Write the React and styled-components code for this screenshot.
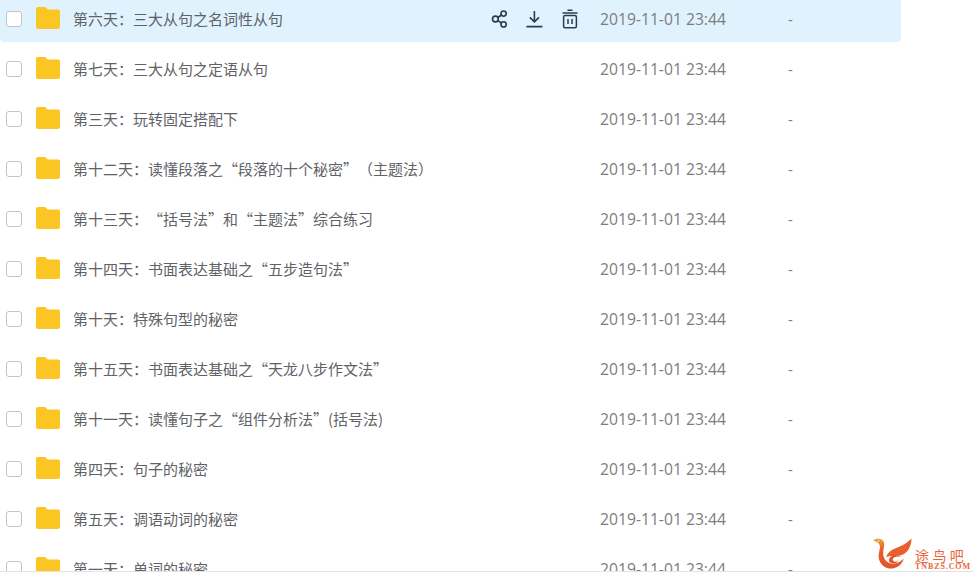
import React from "react";
import styled, { createGlobalStyle } from "styled-components";

const Global = createGlobalStyle`
  html, body { margin: 0; padding: 0; background: #fff; height: 575px; overflow: hidden; }
  #root { height: 575px; }
`;
const Page = styled.div`
  position: relative;
  width: 974px;
  height: 575px;
  overflow: hidden;
  display: flex;
  flex-direction: column;
  font-family: "Noto Sans CJK SC", "Open Sans", sans-serif;
`;
const Viewport = styled.div`
  height: 571px;
  overflow: hidden;
  border-bottom: 1px solid #e3e3e3;
  flex: none;
`;
const List = styled.div`
  width: 901px;
  margin-top: -6px;
  display: flex;
  flex-direction: column;
`;
const Row = styled.div`
  height: 50px;
  flex: none;
  display: flex;
  align-items: center;
  background: ${(p) => (p.$active ? "#e0f2fd" : "transparent")};
  clip-path: inset(0 0 2px 0 round 0 0 4px 4px);
`;
const Check = styled.span`
  box-sizing: border-box;
  width: 16px;
  height: 16px;
  margin-left: 6px;
  border: 1.5px solid #c4c4c4;
  border-radius: 3px;
  background: #fff;
  flex: none;
`;
const FolderSlot = styled.span`
  margin-left: 13px;
  width: 26px;
  height: 24px;
  flex: none;
  display: flex;
  margin-top: -3px;
`;
const Name = styled.div`
  margin-left: 12px;
  margin-bottom: 2px;
  width: 416px;
  flex: none;
  font-size: 15px;
  color: #5f6368;
  white-space: nowrap;
  text-spacing-trim: space-all;
`;
const Actions = styled.div`
  width: 111px;
  flex: none;
  display: flex;
  gap: 13px;
  color: #2c3a4a;
  margin-bottom: 1px;
`;
const Action = styled.span`
  width: 22px;
  height: 22px;
  display: flex;
  align-items: center;
  justify-content: center;
`;
const Time = styled.div`
  width: 188px;
  flex: none;
  font-family: "Open Sans", sans-serif;
  font-size: 15.7px;
  margin-bottom: 1px;
  color: #7d7d7d;
  white-space: nowrap;
`;
const Size = styled.div`
  font-family: "Open Sans", sans-serif;
  font-size: 15px;
  margin-bottom: 1px;
  color: #7d7d7d;
`;
const Watermark = styled.div`
  position: absolute;
  left: 872px;
  top: 538px;
  width: 100px;
  height: 34px;
  display: flex;
  align-items: flex-start;
`;
const MarkText = styled.div`
  margin-left: 2px;
  margin-top: 9px;
  display: flex;
  flex-direction: column;
  color: #e8663a;
`;
const MarkCn = styled.span`
  font-size: 14px;
  line-height: 16px;
  letter-spacing: 3.4px;
  font-family: "Noto Sans CJK SC", sans-serif;
`;
const MarkEn = styled.span`
  font-family: "Liberation Serif", serif;
  font-size: 8px;
  line-height: 8px;
  font-weight: bold;
  letter-spacing: 0.9px;
`;

const Folder = () => (
  <svg width="26" height="24" viewBox="0 0 26 24">
    <path
      d="M1 3C1 1.8 1.8 1 3 1h6.4c.8 0 1.4.3 1.9.9l1.3 1.7h10.6c1.1 0 1.8.8 1.8 1.9v15.6c0 1.1-.8 1.9-1.9 1.9H3c-1.2 0-2-.8-2-2z"
      fill="#fbc524"
    />
  </svg>
);
const Share = () => (
  <svg width="18" height="20" viewBox="0 0 18 20" fill="none" stroke="currentColor" strokeWidth="1.6">
    <circle cx="12.6" cy="4.6" r="2.6" />
    <circle cx="4.4" cy="10" r="2.9" />
    <circle cx="12.6" cy="15.4" r="2.6" />
    <path d="M10.4 6 6.9 8.5M6.9 11.6l3.5 2.4" />
  </svg>
);
const Download = () => (
  <svg width="18" height="18" viewBox="0 0 18 18" fill="none" stroke="currentColor" strokeWidth="1.6">
    <path d="M8.4 1v10.5M3.8 7.4l4.6 4.4L13 7.4M.4 16.6h16" />
  </svg>
);
const Trash = () => (
  <svg width="18" height="20" viewBox="0 0 18 20" fill="none" stroke="currentColor" strokeWidth="1.5">
    <path d="M6.5 1.2h5M1.5 4h15" />
    <rect x="2.6" y="6.4" width="12.8" height="12.4" rx="1.5" />
    <path d="M7 10v5M11 10v5" />
  </svg>
);
const Bird = () => (
  <svg width="41" height="33" viewBox="0 0 41 33">
    <defs>
      <linearGradient id="birdHead" x1="0" y1="0" x2="0" y2="1">
        <stop offset="0" stopColor="#efa23a" />
        <stop offset="0.35" stopColor="#e8602c" />
        <stop offset="1" stopColor="#e2532a" />
      </linearGradient>
    </defs>
    <path
      d="M1 2.5C3 .6 7 0 9.6 1.6 12 3 12.8 6 12 9c-1 4.500-1.400 8.500.6 12 2 3.600 6.400 5.400 10.400 4.600 3.600-.6 6.400-2.400 8.600-5-.8 4.400-4.400 9-10.600 9.800-6 .8-11-2-13.400-7.400C5.400 18 7.600 13 8 9.600 8.300 6.600 6.600 4 1 2.500z"
      fill="url(#birdHead)"
    />
    <path d="M14 19C17 11.500 24 10.500 30 7.500 34 5.500 37 3 39.500.5 39.500 9 35 16 28 17.500c-5 1-9-.5-14 1.500z" fill="#e8602c" />
    <path
      d="M17 23c-.4-3 2.400-5.600 6-5.800 2.600-.2 5 .4 7 1.600-2.800-.4-6-.4-8 .8-1.600 1-1.800 3 0 3.800 1.400.6 3 0 3.600-1 .2 2-2 3.200-4.200 3-2.200-.2-4.200-1-4.400-2.400z"
      fill="#e2532a"
    />
    <circle cx="6.500" cy="3" r=".8" fill="#fff" />
  </svg>
);

const names = [
  "第六天：三大从句之名词性从句",
  "第七天：三大从句之定语从句",
  "第三天：玩转固定搭配下",
  "第十二天：读懂段落之“段落的十个秘密”（主题法）",
  "第十三天：“括号法”和“主题法”综合练习",
  "第十四天：书面表达基础之“五步造句法”",
  "第十天：特殊句型的秘密",
  "第十五天：书面表达基础之“天龙八步作文法”",
  "第十一天：读懂句子之“组件分析法”(括号法)",
  "第四天：句子的秘密",
  "第五天：调语动词的秘密",
  "第一天：单词的秘密",
];

export default function App() {
  return (
    <Page>
      <Global />
      <Viewport>
        <List>
          {names.map((name, i) => (
            <Row key={name} $active={i === 0}>
              <Check />
              <FolderSlot><Folder /></FolderSlot>
              <Name>{name}</Name>
              <Actions>
                {i === 0 && (
                  <>
                    <Action><Share /></Action>
                    <Action><Download /></Action>
                    <Action><Trash /></Action>
                  </>
                )}
              </Actions>
              <Time>2019-11-01 23:44</Time>
              <Size>-</Size>
            </Row>
          ))}
        </List>
      </Viewport>
      <Watermark>
        <Bird />
        <MarkText>
          <MarkCn>途鸟吧</MarkCn>
          <MarkEn>TNBZS.COM</MarkEn>
        </MarkText>
      </Watermark>
    </Page>
  );
}
